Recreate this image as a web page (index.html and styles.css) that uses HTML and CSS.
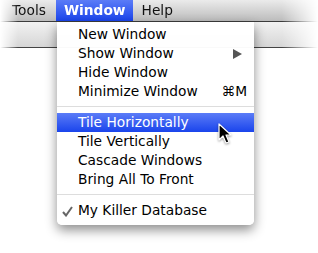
FILE: index.html
```html
<!DOCTYPE html>
<html lang="en">
<head>
    <meta charset="utf-8" />
    <title>Window menu</title>
    <link rel="stylesheet" href="styles.css">
</head>
<body>
    <div class="screen">
        <div class="chrome">
            <div class="menubar">
                <span class="title">Tools</span>
                <span class="title active">Window</span>
                <span class="title">Help</span>
            </div>
            <div class="toolbar"></div>
        </div>

        <div class="menu">
            <div class="item">New Window</div>
            <div class="item">Show Window
                <svg class="arrow" width="9" height="10" viewBox="0 0 9 10"><path d="M0 0 L9 5 L0 10 Z" fill="#555"/></svg>
            </div>
            <div class="item">Hide Window</div>
            <div class="item">Minimize Window <span class="key">⌘M</span></div>
            <div class="sep"></div>
            <div class="item selected">Tile Horizontally</div>
            <div class="item">Tile Vertically</div>
            <div class="item">Cascade Windows</div>
            <div class="item">Bring All To Front</div>
            <div class="sep"></div>
            <div class="item">
                <svg class="check" width="11" height="11" viewBox="0 0 11 11"><path d="M1 6 L4 9.5 L10 1" fill="none" stroke="#666" stroke-width="2"/></svg>
                My Killer Database
            </div>
        </div>

        <svg class="cursor" width="16" height="22" viewBox="0 0 16 22">
            <path d="M1 1 L1 17 L5 13 L8 20 L11 19 L8 12 L13 12 Z" fill="#000" stroke="#fff" stroke-width="1.2" stroke-linejoin="round"/>
        </svg>
    </div>
</body>
</html>
```

FILE: styles.css
```css
body {
    margin: 0;
    background-color: #fff;
    font-family: "DejaVu Sans", sans-serif;
}

.screen {
    position: relative;
    width: 318px;
    height: 253px;
    overflow: hidden;
    background-color: #fff;
}

.chrome {
    -webkit-mask-image: linear-gradient(to right, transparent 0, #000 18px, #000 282px, transparent 318px);
    mask-image: linear-gradient(to right, transparent 0, #000 18px, #000 282px, transparent 318px);
}

.menubar {
    display: flex;
    height: 21px;
    padding-left: 3px;
    background: linear-gradient(#ebebeb, #bcbcbc);
    border-bottom: 1px solid #3c3c3c;
    font-size: 13.75px;
    line-height: 21px;
    color: #111;
}

.title {
    padding: 0 9px;
}

.title.active {
    margin-left: 1px;
    padding: 0 7px 0 8px;
    font-weight: bold;
    color: #fff;
    background: linear-gradient(#5b7cf7, #1a44ec);
}

.toolbar {
    height: 25px;
    background: linear-gradient(#f2f2f2, #d6d6d6);
    border-bottom: 1px solid #444;
}

.menu {
    position: absolute;
    left: 57px;
    top: 22px;
    width: 197px;
    padding: 3px 0 5px;
    background-color: rgba(255, 255, 255, 0.97);
    border-radius: 0 0 5px 5px;
    box-shadow: 0 5px 12px rgba(0, 0, 0, 0.45);
    font-size: 13.75px;
}

.item {
    position: relative;
    height: 19px;
    line-height: 19px;
    padding-left: 21px;
    color: #000;
}

.item.selected {
    color: #fff;
    background: linear-gradient(#5b7cf7, #1a44ec);
}

.sep {
    height: 1px;
    margin: 5px 0 6px;
    background-color: #ddd;
}

.arrow {
    position: absolute;
    right: 12px;
    top: 5px;
}

.key {
    position: absolute;
    right: 7px;
}

.check {
    position: absolute;
    left: 5px;
    top: 5px;
}

.cursor {
    position: absolute;
    left: 218px;
    top: 123px;
    filter: drop-shadow(0 1px 1px rgba(0, 0, 0, 0.4));
}
```
